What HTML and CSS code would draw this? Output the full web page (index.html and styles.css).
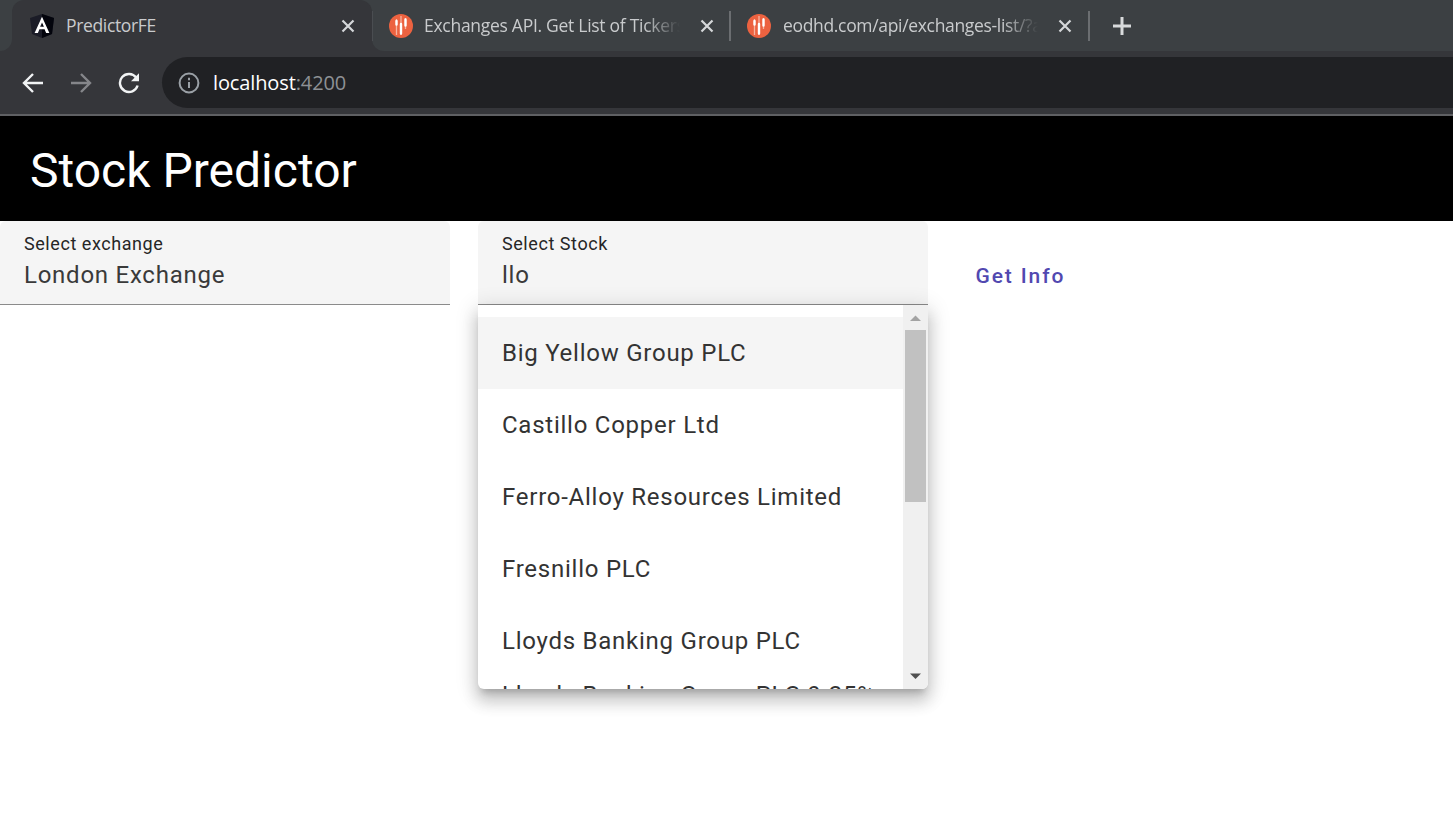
FILE: index.html
```html
<!DOCTYPE html>
<html lang="en">
<head>
<meta charset="utf-8">
<title>PredictorFE</title>
<link rel="stylesheet" href="styles.css">
</head>
<body>
<header class="browser">
  <div class="tabs">
    <div class="strip-start"></div>
    <div class="tab-active-wrap">
      <div class="tab tab-active">
        <svg class="favicon" viewBox="0 0 24 24"><path d="M12 0 24 4 22 20 12 24 2 20 0 4Z" fill="#1b1c27"/><path d="M12 0 24 4 22 20 12 24Z" fill="#03040c"/><path d="M12 2.800 4.600 19h3.300l1.500-3.800h5.200L16.100 19h3.300ZM12 8.400 13.900 12.800H10.100Z" fill="#fff" fill-rule="evenodd"/></svg>
        <span class="tab-title title-app">PredictorFE</span>
        <svg class="close" viewBox="0 0 14 14"><path d="M1.500 1.500 12.500 12.500M12.500 1.500 1.500 12.500"/></svg>
      </div>
    </div>
    <div class="strip">
      <div class="tab tab-exchanges">
        <svg class="favicon" viewBox="0 0 24 24"><circle cx="12" cy="12" r="12" fill="#ec6240"/><path d="M7.500 5v16M12 2v19M16.500 4v11" stroke="#f7b4a1" stroke-width="1.300"/><path d="M7.500 7v3.500M12 10v9.500M16.500 5.500v6" stroke="#fff" stroke-width="2.400" stroke-linecap="round"/></svg>
        <span class="tab-title title-exchanges fade">Exchanges API. Get List of Tickers</span>
        <svg class="close" viewBox="0 0 14 14"><path d="M1.500 1.500 12.500 12.500M12.500 1.500 1.500 12.500"/></svg>
      </div>
      <div class="tab tab-list">
        <svg class="favicon" viewBox="0 0 24 24"><circle cx="12" cy="12" r="12" fill="#ec6240"/><path d="M7.500 5v16M12 2v19M16.500 4v11" stroke="#f7b4a1" stroke-width="1.300"/><path d="M7.500 7v3.500M12 10v9.500M16.500 5.500v6" stroke="#fff" stroke-width="2.400" stroke-linecap="round"/></svg>
        <span class="tab-title title-list fade">eodhd.com/api/exchanges-list/?a</span>
        <svg class="close" viewBox="0 0 14 14"><path d="M1.500 1.500 12.500 12.500M12.500 1.500 1.500 12.500"/></svg>
      </div>
      <svg class="plus" viewBox="0 0 20 20"><path d="M10 1v18M1 10h18"/></svg>
    </div>
  </div>
  <div class="toolbar">
    <svg class="nav" viewBox="0 0 22 22"><path d="M21 11H2M11 2 2 11l9 9"/></svg>
    <svg class="nav nav-off" viewBox="0 0 22 22"><path d="M1 11H20M11 2l9 9-9 9"/></svg>
    <svg class="nav" viewBox="0 0 22 22"><path d="M18.200 5.600A9 9 0 1 0 19.600 13.500"/><path class="solid" d="M21 1.200V9.200H13Z"/></svg>
    <div class="omnibox">
      <svg class="info" viewBox="0 0 22 22"><circle cx="11" cy="11" r="9.400"/><path d="M11 10v6M11 5.800v2.400"/></svg>
      <span class="url">localhost<span class="port">:4200</span></span>
    </div>
  </div>
</header>
<main>
  <h1 class="app-bar">Stock Predictor</h1>
  <form class="controls">
    <div class="field">
      <label class="label">Select exchange</label>
      <div class="value">London Exchange</div>
    </div>
    <div class="field">
      <label class="label">Select Stock</label>
      <div class="value">llo</div>
      <div class="panel">
        <div class="options">
          <div class="option option-current">Big Yellow Group PLC</div>
          <div class="option">Castillo Copper Ltd</div>
          <div class="option">Ferro-Alloy Resources Limited</div>
          <div class="option">Fresnillo PLC</div>
          <div class="option">Lloyds Banking Group PLC</div>
          <div class="option option-long">Lloyds Banking Group PLC 9.25%</div>
        </div>
        <div class="scrollbar">
          <svg class="arrow" viewBox="0 0 25 25"><path d="M7 16h11L12.500 10.500Z" fill="#a3a3a3"/></svg>
          <div class="thumb"></div>
          <svg class="arrow" viewBox="0 0 25 25"><path d="M7 9.500h11L12.500 15Z" fill="#505050"/></svg>
        </div>
      </div>
    </div>
    <button class="get-info" type="button">Get Info</button>
  </form>
</main>
</body>
</html>
```
FILE: styles.css
```css
* { box-sizing: border-box; }
body { margin: 0; height: 817px; overflow: hidden; background: #fff; font-family: Roboto, sans-serif; }
svg { display: block; flex: none; }

.browser { height: 116px; background: #35363a; border-bottom: 2px solid #5f6063; font-family: "Open Sans", "Noto Sans", sans-serif; }
.tabs { display: flex; height: 51px; }
.strip-start { width: 12px; background: #3c4043; border-bottom-right-radius: 12px; }
.tab-active-wrap { width: 360px; background: linear-gradient(#3c4043 50%, #35363a 50%); }
.strip { flex: 1; display: flex; align-items: center; background: #3c4043; border-bottom-left-radius: 12px; }
.tab { display: flex; align-items: center; }
.tab-active { height: 51px; padding: 0 17px 0 18px; background: #35363a; border-radius: 12px 12px 0 0; }
.tab-exchanges { width: 359px; height: 30px; padding: 0 15px 0 16px; border-left: 1px solid #4a4d51; border-right: 2px solid #6b6e71; }
.tab-list { width: 359px; height: 30px; padding: 0 16px 0 16px; border-right: 2px solid #6b6e71; }
.favicon { width: 24px; height: 24px; }
.tab-title { flex: 1; margin: 0 20px 0 12px; padding-bottom: 1px; overflow: hidden; white-space: nowrap; font-size: 17.5px; line-height: 29px; color: #c9cbcd; }
.title-app { letter-spacing: -0.35px; }
.title-exchanges { letter-spacing: -0.28px; margin-left: 11px; }
.title-list { letter-spacing: -0.33px; }
.fade { -webkit-mask-image: linear-gradient(90deg, #000 calc(100% - 36px), transparent); mask-image: linear-gradient(90deg, #000 calc(100% - 36px), transparent); }
.close { width: 14px; height: 14px; fill: none; stroke: #d5d7d9; stroke-width: 2.2; }
.plus { width: 20px; height: 20px; margin-left: 22px; fill: none; stroke: #d8dadc; stroke-width: 3; }

.toolbar { display: flex; align-items: center; gap: 26px; height: 63px; padding-left: 22px; }
.nav { width: 22px; height: 22px; fill: none; stroke: #f1f3f4; stroke-width: 2.4; }
.nav .solid { fill: #f1f3f4; stroke: none; }
.nav-off { stroke: #85868a; }
.omnibox { flex: 1; display: flex; align-items: center; height: 51px; margin-left: -4px; padding-left: 16px; background: #202124; border-radius: 26px 0 0 26px; }
.info { width: 22px; height: 22px; fill: none; stroke: #9aa0a6; stroke-width: 2; }
.url { margin-left: 13px; font-size: 20px; letter-spacing: -0.12px; color: #fff; }
.port { color: #8e9195; }

.app-bar { margin: 0; height: 105px; padding-left: 30px; background: #000; color: #fff; font-size: 48px; font-weight: 400; line-height: 110px; }
.controls { display: flex; gap: 28px; }
.field { position: relative; width: 450px; height: 84px; padding: 13px 24px 0; background: #f5f5f5; border-bottom: 1px solid #8b8b8b; border-radius: 6px 6px 0 0; }
.label { display: block; font-size: 18px; line-height: 20px; letter-spacing: 0.5625px; color: #262626; }
.value { margin-top: 3px; font-size: 24px; line-height: 36px; letter-spacing: 0.75px; color: #3a3a3a; }
.panel { position: absolute; top: 84px; left: 0; display: flex; width: 450px; height: 384px; overflow: hidden; background: #fff; border-radius: 0 0 6px 6px; box-shadow: 0 7.5px 7.5px -4.5px rgba(0,0,0,.2), 0 12px 15px 1.5px rgba(0,0,0,.14), 0 4.5px 21px 3px rgba(0,0,0,.12); }
.options { flex: 1; padding-top: 12px; overflow: hidden; }
.option { height: 72px; padding: 0 24px; font-size: 24px; line-height: 72px; letter-spacing: 0.75px; white-space: nowrap; color: #333; }
.option-current { background: #f5f5f5; }
.option-long { line-height: 36px; }
.scrollbar { display: flex; flex-direction: column; align-items: center; width: 25px; background: #f0f0f0; }
.arrow { width: 25px; height: 25px; }
.thumb { width: 21px; height: 172px; margin-bottom: auto; background: #c1c1c1; }
.get-info { margin: 28px 0 0 7.5px; padding: 0 12px; height: 54px; border: 0; background: none; font: 500 21px/54px Roboto, sans-serif; letter-spacing: 1.875px; color: #5148b0; }
```
